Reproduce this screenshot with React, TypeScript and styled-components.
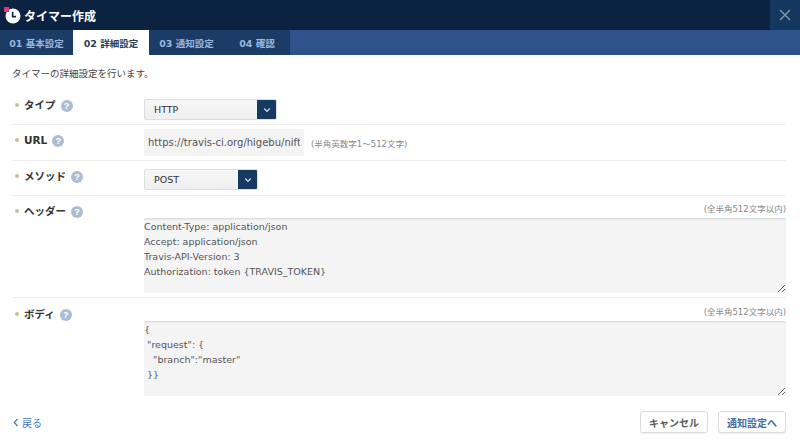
import styled, { createGlobalStyle } from "styled-components";

const GlobalStyle = createGlobalStyle`
  html, body {
    margin: 0;
    padding: 0;
    background: #ffffff;
  }
  body {
    font-family: "DejaVu Sans", "Noto Sans CJK JP", sans-serif;
    color: #333333;
    font-size: 9.5px;
  }
  * { box-sizing: border-box; }
`;

const tabs = ["01 基本設定", "02 詳細設定", "03 通知設定", "04 確認"];
const tabWidths = [73, 76, 75, 66];

const headerText = `Content-Type: application/json
Accept: application/json
Travis-API-Version: 3
Authorization: token {TRAVIS_TOKEN}`;

const bodyText = `{
 "request": {
   "branch":"master"
 }}`;

function ClockIcon() {
  return (
    <svg width="17" height="17" viewBox="0 0 17 17">
      <circle cx="9" cy="9" r="7.5" fill="#ffffff" />
      <path d="M8.6 4.8 V9.6 H12" stroke="#0b2240" strokeWidth="1.6" fill="none" />
      <rect x="0" y="0" width="5" height="5" fill="#e8347a" />
    </svg>
  );
}

function Chevron({ dir }: { dir: "down" | "left" }) {
  return dir === "down" ? (
    <svg width="8" height="6" viewBox="0 0 8 6">
      <path d="M1.2 1.5 L4 4.3 L6.8 1.5" stroke="#d6e2f2" strokeWidth="1.2" fill="none" />
    </svg>
  ) : (
    <svg width="6" height="9" viewBox="0 0 6 9">
      <path d="M4.5 1 L1.3 4.5 L4.5 8" stroke="#4a7ab5" strokeWidth="1.2" fill="none" />
    </svg>
  );
}

export default function App() {
  return (
    <>
      <GlobalStyle />
      <Dialog>
        <TitleBar>
          <Title>
            <ClockIcon />
            タイマー作成
          </Title>
          <CloseButton aria-label="close">
            <svg width="12" height="12" viewBox="0 0 12 12">
              <path d="M1 1 L11 11 M11 1 L1 11" stroke="#8797ac" strokeWidth="1.4" />
            </svg>
          </CloseButton>
        </TitleBar>
        <TabBar>
          {tabs.map((t, i) => (
            <Tab key={t} $active={i === 1} $width={tabWidths[i]}>
              {t}
            </Tab>
          ))}
        </TabBar>
        <Content>
          <Description>タイマーの詳細設定を行います。</Description>

          <Row>
            <Label $top={6}>
              タイプ
              <HelpIcon>?</HelpIcon>
            </Label>
            <Field $top={7} $bottom={4}>
              <Select $width={133}>
                <SelectValue>HTTP</SelectValue>
                <SelectArrow>
                  <Chevron dir="down" />
                </SelectArrow>
              </Select>
            </Field>
          </Row>

          <Row>
            <Label $top={8}>
              URL
              <HelpIcon>?</HelpIcon>
            </Label>
            <Field $top={4} $bottom={4}>
              <TextInput readOnly value="https://travis-ci.org/higebu/nifty-cloud-timer" />
              <Hint>(半角英数字1～512文字)</Hint>
            </Field>
          </Row>

          <Row>
            <Label $top={8}>
              メソッド
              <HelpIcon>?</HelpIcon>
            </Label>
            <Field $top={8} $bottom={5}>
              <Select $width={114}>
                <SelectValue>POST</SelectValue>
                <SelectArrow>
                  <Chevron dir="down" />
                </SelectArrow>
              </Select>
            </Field>
          </Row>

          <Row>
            <Label $top={8}>
              ヘッダー
              <HelpIcon>?</HelpIcon>
            </Label>
            <Field $top={7} $bottom={4} $column>
              <Limit>(全半角512文字以内)</Limit>
              <TextArea readOnly defaultValue={headerText} />
            </Field>
          </Row>

          <Row $last>
            <Label $top={9}>
              ボディ
              <HelpIcon>?</HelpIcon>
            </Label>
            <Field $top={8} $bottom={5} $column>
              <Limit>(全半角512文字以内)</Limit>
              <TextArea readOnly defaultValue={bodyText} />
            </Field>
          </Row>

          <Footer>
            <BackLink>
              <Chevron dir="left" />
              戻る
            </BackLink>
            <Buttons>
              <Button>キャンセル</Button>
              <Button $primary>通知設定へ</Button>
            </Buttons>
          </Footer>
        </Content>
      </Dialog>
    </>
  );
}

const Dialog = styled.div`
  width: 800px;
  height: 447px;
  display: flex;
  flex-direction: column;
  background: #ffffff;
  overflow: hidden;
`;

const TitleBar = styled.div`
  height: 30px;
  display: flex;
  align-items: stretch;
  justify-content: space-between;
  background: #0b2240;
`;

const Title = styled.h1`
  margin: 0;
  display: flex;
  align-items: center;
  gap: 3px;
  padding-left: 4px;
  font-family: "Noto Sans CJK JP", sans-serif;
  font-size: 12px;
  font-weight: 700;
  color: #ffffff;
`;

const CloseButton = styled.button`
  width: 30px;
  border: none;
  padding: 0;
  display: flex;
  align-items: center;
  justify-content: center;
  background: #14375f;
`;

const TabBar = styled.div`
  height: 25px;
  display: flex;
  background: #30528a;
`;

const Tab = styled.div<{ $active?: boolean; $width: number }>`
  width: ${(p) => p.$width}px;
  display: flex;
  align-items: center;
  justify-content: center;
  font-size: 9.5px;
  font-weight: 700;
  color: ${(p) => (p.$active ? "#2b3d55" : "#9bb7de")};
  background: ${(p) => (p.$active ? "#ffffff" : "#1a3c67")};
`;

const Content = styled.div`
  flex: 1;
  display: flex;
  flex-direction: column;
  padding: 0 14px 0 12px;
`;

const Description = styled.p`
  margin: 0;
  padding: 11px 0 10px;
  line-height: 16px;
  color: #444444;
`;

const Row = styled.div<{ $last?: boolean }>`
  display: grid;
  grid-template-columns: 132px 1fr;
  align-items: start;
  border-bottom: ${(p) => (p.$last ? "none" : "1px solid #eeeeee")};
`;

const Label = styled.div<{ $top: number }>`
  position: relative;
  display: flex;
  align-items: center;
  padding: ${(p) => p.$top}px 0 0 12px;
  font-size: 10.5px;
  font-weight: 700;
  line-height: 14px;
  color: #333333;
  &::before {
    content: "";
    position: absolute;
    left: 3px;
    top: ${(p) => p.$top + 5}px;
    width: 4px;
    height: 4px;
    border-radius: 50%;
    background: #c7c199;
  }
`;

const HelpIcon = styled.span`
  width: 12px;
  height: 12px;
  margin-left: 5px;
  margin-top: 2px;
  border-radius: 50%;
  background: #abbdd5;
  color: #ffffff;
  font-family: "Liberation Sans", sans-serif;
  font-size: 9px;
  font-weight: 700;
  line-height: 12px;
  text-align: center;
`;

const Field = styled.div<{ $top: number; $bottom: number; $column?: boolean }>`
  display: flex;
  flex-direction: ${(p) => (p.$column ? "column" : "row")};
  align-items: ${(p) => (p.$column ? "stretch" : "center")};
  padding: ${(p) => p.$top}px 0 ${(p) => p.$bottom}px;
`;

const Select = styled.div<{ $width: number }>`
  width: ${(p) => p.$width}px;
  height: 21px;
  display: flex;
  border: 1px solid #dddddd;
  border-radius: 2px;
  background: linear-gradient(#f7f7f7, #efefef);
  overflow: hidden;
`;

const SelectValue = styled.div`
  flex: 1;
  display: flex;
  align-items: center;
  padding-left: 9px;
  color: #333333;
`;

const SelectArrow = styled.div`
  width: 19px;
  display: flex;
  align-items: center;
  justify-content: center;
  background: #173a63;
`;

const TextInput = styled.input`
  width: 160px;
  height: 27px;
  padding: 0 4px;
  border: none;
  outline: none;
  border-radius: 2px;
  background: #f3f3f3;
  font-family: inherit;
  font-size: 10px;
  color: #555555;
`;

const Hint = styled.span`
  margin-left: 7px;
  font-size: 8.5px;
  color: #888888;
`;

const Limit = styled.div`
  text-align: right;
  font-size: 8.5px;
  line-height: 12px;
  color: #888888;
  margin-bottom: 3px;
`;

const TextArea = styled.textarea`
  display: block;
  width: 100%;
  height: 75px;
  margin: 0;
  padding: 1px 0;
  border: none;
  outline: none;
  resize: vertical;
  overflow: hidden;
  font-family: inherit;
  font-size: 9.5px;
  line-height: 15px;
  color: #555555;
  background: #f4f4f4;
  border-radius: 2px;
  box-shadow: inset 0 2px 2px -1px #d5d5d5;
`;

const Footer = styled.div`
  display: flex;
  align-items: center;
  justify-content: space-between;
  margin-top: 10px;
`;

const BackLink = styled.a`
  display: flex;
  align-items: center;
  gap: 3px;
  padding-left: 1px;
  font-size: 10px;
  color: #4a7ab5;
  cursor: pointer;
`;

const Buttons = styled.div`
  display: flex;
  gap: 10px;
`;

const Button = styled.button<{ $primary?: boolean }>`
  height: 22px;
  padding: 0 8px;
  font-family: inherit;
  font-size: 10px;
  font-weight: 700;
  color: ${(p) => (p.$primary ? "#3f6fa6" : "#5a5a5a")};
  background: #ffffff;
  border: 1px solid #dcdcdc;
  border-radius: 3px;
  box-shadow: 0 1px 1px rgba(0, 0, 0, 0.06);
`;
